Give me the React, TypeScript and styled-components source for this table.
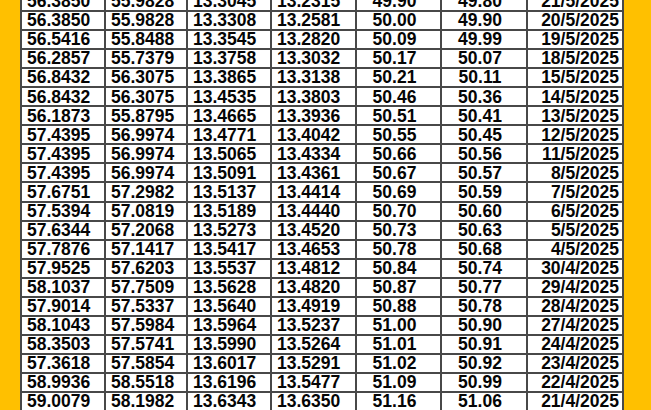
import React from "react";
import styled, { createGlobalStyle } from "styled-components";

const Global = createGlobalStyle`
  html, body {
    margin: 0;
    padding: 0;
    background: #ffc000;
    overflow: hidden;
  }
  body {
    width: 651px;
    height: 410px;
  }
`;

const Page = styled.div`
  width: 651px;
  height: 410px;
  overflow: hidden;
  background: #ffc000;
  padding-left: 20px;
  box-sizing: border-box;
`;

const Sheet = styled.div`
  display: grid;
  grid-template-columns: 84px 82px 84px 85px 85px 86px 96px;
  grid-auto-rows: 19.05px;
  width: 604px;
  margin-top: -7px;
  background: #ffffff;
  border-left: 2px solid #484848;
  box-sizing: border-box;
  font-family: "Liberation Sans", Arial, sans-serif;
  font-weight: bold;
  font-size: 17.5px;
  color: #050505;
`;

const Cell = styled.div<{ $align: "left" | "center" | "right" }>`
  box-sizing: border-box;
  border-right: 2px solid #484848;
  border-bottom: 2px solid #484848;
  display: flex;
  align-items: center;
  justify-content: ${(p) =>
    p.$align === "left" ? "flex-start" : p.$align === "right" ? "flex-end" : "center"};
  padding: 1px
    ${(p) => (p.$align === "right" ? "3px" : p.$align === "center" ? "8px" : "0")} 0
    ${(p) => (p.$align === "left" ? "5px" : "0")};
  line-height: 1;
  white-space: nowrap;
  overflow: hidden;
`;

const rows: string[][] = [
  ["56.3850", "55.9828", "13.3045", "13.2315", "49.90", "49.80", "21/5/2025"],
  ["56.3850", "55.9828", "13.3308", "13.2581", "50.00", "49.90", "20/5/2025"],
  ["56.5416", "55.8488", "13.3545", "13.2820", "50.09", "49.99", "19/5/2025"],
  ["56.2857", "55.7379", "13.3758", "13.3032", "50.17", "50.07", "18/5/2025"],
  ["56.8432", "56.3075", "13.3865", "13.3138", "50.21", "50.11", "15/5/2025"],
  ["56.8432", "56.3075", "13.4535", "13.3803", "50.46", "50.36", "14/5/2025"],
  ["56.1873", "55.8795", "13.4665", "13.3936", "50.51", "50.41", "13/5/2025"],
  ["57.4395", "56.9974", "13.4771", "13.4042", "50.55", "50.45", "12/5/2025"],
  ["57.4395", "56.9974", "13.5065", "13.4334", "50.66", "50.56", "11/5/2025"],
  ["57.4395", "56.9974", "13.5091", "13.4361", "50.67", "50.57", "8/5/2025"],
  ["57.6751", "57.2982", "13.5137", "13.4414", "50.69", "50.59", "7/5/2025"],
  ["57.5394", "57.0819", "13.5189", "13.4440", "50.70", "50.60", "6/5/2025"],
  ["57.6344", "57.2068", "13.5273", "13.4520", "50.73", "50.63", "5/5/2025"],
  ["57.7876", "57.1417", "13.5417", "13.4653", "50.78", "50.68", "4/5/2025"],
  ["57.9525", "57.6203", "13.5537", "13.4812", "50.84", "50.74", "30/4/2025"],
  ["58.1037", "57.7509", "13.5628", "13.4820", "50.87", "50.77", "29/4/2025"],
  ["57.9014", "57.5337", "13.5640", "13.4919", "50.88", "50.78", "28/4/2025"],
  ["58.1043", "57.5984", "13.5964", "13.5237", "51.00", "50.90", "27/4/2025"],
  ["58.3503", "57.5741", "13.5990", "13.5264", "51.01", "50.91", "24/4/2025"],
  ["57.3618", "57.5854", "13.6017", "13.5291", "51.02", "50.92", "23/4/2025"],
  ["58.9936", "58.5518", "13.6196", "13.5477", "51.09", "50.99", "22/4/2025"],
  ["59.0079", "58.1982", "13.6343", "13.6350", "51.16", "51.06", "21/4/2025"],
];

const aligns: ("left" | "center" | "right")[] = [
  "left",
  "left",
  "left",
  "left",
  "center",
  "center",
  "right",
];

export default function App() {
  return (
    <>
      <Global />
      <Page>
        <Sheet>
          {rows.map((r, i) =>
            r.map((v, j) => (
              <Cell key={`${i}-${j}`} $align={aligns[j]}>
                {v}
              </Cell>
            ))
          )}
        </Sheet>
      </Page>
    </>
  );
}
